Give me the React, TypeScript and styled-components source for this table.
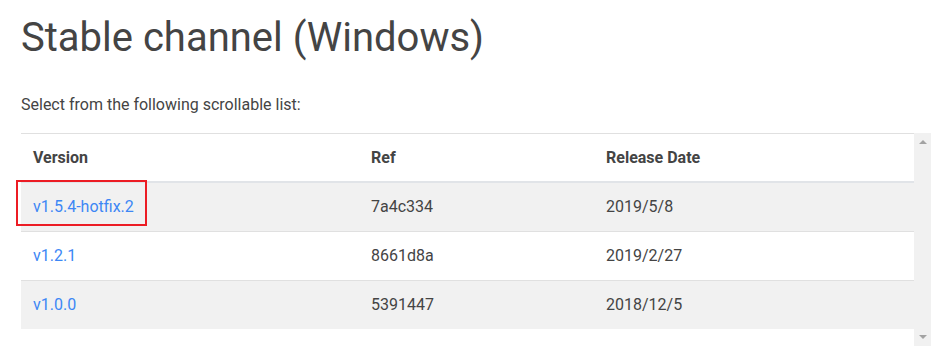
import styled, { createGlobalStyle } from 'styled-components';

const GlobalStyle = createGlobalStyle`
  html, body {
    margin: 0;
    padding: 0;
    background: #fff;
  }
  body {
    font-family: Roboto, "Noto Sans", Arial, sans-serif;
    color: #444;
  }
`;

const Page = styled.div`
  width: 946px;
  height: 350px;
  padding: 14px 15px 0 21px;
  box-sizing: border-box;
  overflow: hidden;
`;

const Title = styled.h1`
  margin: 0;
  font-family: Roboto, "Open Sans", sans-serif;
  font-weight: 400;
  font-size: 40px;
  line-height: 48px;
  color: #444;
`;

const Intro = styled.p`
  margin: 31px 0 0;
  font-size: 16px;
  line-height: 24px;
  color: #444;
`;

const ListFrame = styled.div`
  display: flex;
  margin-top: 16px;
  height: 213px;
`;

const TableArea = styled.div`
  flex: 1;
  min-width: 0;
  border-top: 1px solid #e0e0e0;
`;

const Table = styled.table`
  width: 100%;
  border-collapse: collapse;
  table-layout: fixed;
  font-size: 16px;
  line-height: 24px;
`;

const HeadCell = styled.th<{ $width: number }>`
  box-sizing: border-box;
  width: ${p => p.$width}px;
  height: 48px;
  padding: 0 12px;
  text-align: left;
  font-weight: 700;
  color: #444;
  border-bottom: 2px solid #e1e4e8;
`;

const Row = styled.tr<{ $shaded: boolean }>`
  background: ${p => (p.$shaded ? '#f1f1f1' : '#fff')};
  border-bottom: 1px solid #e0e0e0;

  &:last-child {
    border-bottom: none;
  }
`;

const Cell = styled.td`
  position: relative;
  height: 48px;
  padding: 0 12px;
  color: #444;
`;

const VersionLink = styled.a`
  color: #3d87f5;
  text-decoration: none;
`;

const Highlight = styled.span`
  position: absolute;
  left: -5px;
  top: -3px;
  width: 131px;
  height: 46px;
  box-sizing: border-box;
  border: 2px solid #ec1c24;
  pointer-events: none;
`;

const Scrollbar = styled.div`
  width: 17px;
  background: #f1f1f1;
  display: flex;
  flex-direction: column;
  justify-content: space-between;
  align-items: center;
  padding: 7px 0 7px;
  box-sizing: border-box;
`;

const Arrow = styled.span<{ $down?: boolean }>`
  width: 0;
  height: 0;
  border-left: 4px solid transparent;
  border-right: 4px solid transparent;
  ${p =>
    p.$down
      ? 'border-top: 4px solid #a3a3a3;'
      : 'border-bottom: 4px solid #a3a3a3;'}
`;

const releases = [
  { version: 'v1.5.4-hotfix.2', ref: '7a4c334', date: '2019/5/8', marked: true },
  { version: 'v1.2.1', ref: '8661d8a', date: '2019/2/27', marked: false },
  { version: 'v1.0.0', ref: '5391447', date: '2018/12/5', marked: false },
];

const App = () => (
  <>
    <GlobalStyle />
    <Page>
      <Title>Stable channel (Windows)</Title>
      <Intro>Select from the following scrollable list:</Intro>
      <ListFrame>
        <TableArea>
          <Table>
            <thead>
              <tr>
                <HeadCell $width={338}>Version</HeadCell>
                <HeadCell $width={235}>Ref</HeadCell>
                <HeadCell $width={320}>Release Date</HeadCell>
              </tr>
            </thead>
            <tbody>
              {releases.map((r, i) => (
                <Row key={r.version} $shaded={i % 2 === 0}>
                  <Cell>
                    {r.marked && <Highlight />}
                    <VersionLink href="#">{r.version}</VersionLink>
                  </Cell>
                  <Cell>{r.ref}</Cell>
                  <Cell>{r.date}</Cell>
                </Row>
              ))}
            </tbody>
          </Table>
        </TableArea>
        <Scrollbar>
          <Arrow />
          <Arrow $down />
        </Scrollbar>
      </ListFrame>
    </Page>
  </>
);

export default App;
